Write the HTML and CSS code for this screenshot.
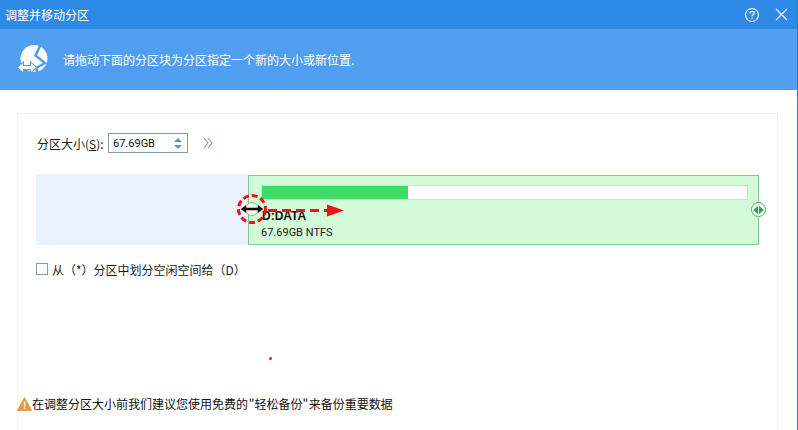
FILE: index.html
```html
<!DOCTYPE html>
<html lang="zh-CN">
<head>
    <meta charset="UTF-8">
    <title>调整并移动分区</title>
    <link rel="stylesheet" href="styles.css">
</head>
<body>
    <div class="window">
        <div class="titlebar">
            <span class="title">调整并移动分区</span>
            <div class="title-buttons">
                <svg class="help-icon" width="16" height="16" viewBox="0 0 16 16">
                    <circle cx="8" cy="8" r="6.500" fill="none" stroke="#fff" stroke-width="1.100"/>
                    <path d="M5.900 6.400c0-1.300 1-2 2.100-2s2.100.7 2.100 1.800c0 1.500-2.100 1.600-2.100 3.100" fill="none" stroke="#fff" stroke-width="1.200"/>
                    <rect x="7.400" y="10.400" width="1.300" height="1.300" fill="#fff"/>
                </svg>
                <svg class="close-icon" width="13" height="13" viewBox="0 0 13 13">
                    <path d="M1 1l11 11M12 1L1 12" stroke="#fff" stroke-width="1.100" fill="none"/>
                </svg>
            </div>
        </div>

        <div class="banner">
            <svg class="banner-icon" width="31" height="32" viewBox="0 0 31 32">
                <circle cx="16" cy="13.500" r="13.500" fill="#fff"/>
                <path d="M23 -1l-5.500 11.500 9.500 7.500-9 5 2 7" fill="none" stroke="#519ef0" stroke-width="2.500"/>
                <path d="M0 22.500l5-4.500v3h8v-3l5 4.500-5 4.500v-3h-8v3z" fill="#fff" stroke="#519ef0" stroke-width="2" paint-order="stroke"/>
            </svg>
            <span>请拖动下面的分区块为分区指定一个新的大小或新位置.</span>
        </div>

        <div class="panel">
            <div class="size-row">
                <label class="size-label" for="sizeInput">分区大小(<u>S</u>):</label>
                <div class="spinner">
                    <span id="sizeInput" class="spinner-value">67.69GB</span>
                    <span class="spinner-arrows">
                        <i class="arrow-up"></i>
                        <i class="arrow-down"></i>
                    </span>
                </div>
                <svg class="more-icon" width="10" height="12" viewBox="0 0 10 12">
                    <path d="M1 1l4 5-4 5M5 1l4 5-4 5" fill="none" stroke="#7d9fd0" stroke-width="1.100"/>
                </svg>
            </div>

            <div class="partition-strip">
                <div class="free-space"></div>
                <div class="partition">
                    <div class="usage-bar"><div class="usage-fill" style="width: 30.200%"></div></div>
                    <div class="partition-name">D:DATA</div>
                    <div class="partition-info">67.69GB NTFS</div>
                    <span class="handle handle-right"><i></i><i></i></span>
                </div>
                <svg class="drag-hint" width="110" height="36" viewBox="0 0 110 36">
                    <circle cx="16" cy="18" r="6.500" fill="#eef9ef" stroke="#6cc37f"/>
                    <circle cx="16" cy="18" r="13.500" fill="none" stroke="#ee1119" stroke-width="3" stroke-dasharray="6 3"/>
                    <path d="M32 19.500h62" stroke="#ee1119" stroke-width="3" stroke-dasharray="9 5" fill="none"/>
                    <path d="M91 13.500l17 6-17 6z" fill="#ee1119"/>
                    <path d="M4.500 18l6-4.500v3h11v-3l6 4.500-6 4.500v-3h-11v3z" fill="#000" stroke="#fff" stroke-width=".5"/>
                </svg>
            </div>

            <label class="split-option">
                <span class="checkbox"></span>
                <span>从（*）分区中划分空闲空间给（D）</span>
            </label>

            <div class="warning">
                <svg width="15" height="14" viewBox="0 0 15 14">
                    <path d="M7.500 .5L14.700 13.500H.3z" fill="#ee9a2e" stroke="#d9852a" stroke-width=".6"/>
                    <rect x="6.800" y="4.500" width="1.500" height="5" fill="#fff"/>
                    <rect x="6.800" y="10.500" width="1.500" height="1.500" fill="#fff"/>
                </svg>
                <span>在调整分区大小前我们建议您使用免费的 "轻松备份" 来备份重要数据</span>
            </div>

            <span class="red-dot"></span>
        </div>
    </div>
</body>
</html>
```

FILE: styles.css
```css
:root {
    --title-color: #2e8ae6;
    --banner-color: #519ef0;
    --panel-border: #f3f3f3;
    --green-border: #7fcb8d;
    --green-bg: #d4fbd8;
}

html, body {
    margin: 0;
    height: 100%;
    overflow: hidden;
}
body {
    font-family: "Noto Sans CJK SC", "Liberation Sans", sans-serif;
    font-size: 12px;
    color: #1c1c1c;
    background-color: #fff;
}
.window {
    height: 430px;
    border-right: 1px solid #2a7dc4;
    display: flex;
    flex-direction: column;
}
.titlebar {
    height: 29px;
    flex: none;
    background-color: var(--title-color);
    color: #fff;
    display: flex;
    align-items: center;
    justify-content: space-between;
    padding-left: 5px;
    padding-right: 9px;
}
.title {
    font-size: 12px;
}
.title-buttons {
    display: flex;
    align-items: center;
    gap: 15px;
}
.banner {
    height: 61px;
    flex: none;
    background-color: var(--banner-color);
    color: #fff;
    display: flex;
    align-items: center;
    gap: 14px;
    padding-left: 18px;
}
.banner-icon {
    flex: none;
    margin-top: 3px;
}
.panel {
    position: relative;
    flex: 1;
    margin: 23px 19px 0 17px;
    padding: 19px 18px 0 18px;
    border: 1px solid var(--panel-border);
    border-bottom: none;
    display: flex;
    flex-direction: column;
}
.size-row {
    display: flex;
    align-items: center;
    height: 20px;
}
.size-label {
    width: 71px;
    flex: none;
    margin-left: 1px;
}
.spinner {
    width: 74px;
    height: 18px;
    border: 1px solid #7f9db9;
    display: flex;
    align-items: center;
    justify-content: space-between;
    padding-left: 4px;
    font-family: Roboto, "Liberation Sans", sans-serif;
    font-size: 11px;
    margin-right: 15px;
}
.spinner-value {
    color: #111;
}
.spinner-arrows {
    display: flex;
    flex-direction: column;
    gap: 3px;
    margin-right: 5px;
}
.arrow-up, .arrow-down {
    display: block;
    width: 0;
    height: 0;
    border-left: 4px solid transparent;
    border-right: 4px solid transparent;
}
.arrow-up {
    border-bottom: 4px solid #6f8fb8;
}
.arrow-down {
    border-top: 4px solid #6f8fb8;
}
.partition-strip {
    position: relative;
    margin-top: 21px;
    height: 71px;
    display: flex;
}
.free-space {
    width: 212px;
    flex: none;
    background-color: #e9f2fe;
}
.partition {
    position: relative;
    width: 511px;
    flex: none;
    box-sizing: border-box;
    margin-top: 1px;
    background-color: var(--green-bg);
    border: 1px solid var(--green-border);
    padding: 9px 10px 0 12px;
    font-family: Roboto, "Liberation Sans", sans-serif;
    font-size: 11px;
}
.usage-bar {
    height: 13px;
    background-color: #fff;
    border: 1px solid #c5e3cb;
}
.usage-fill {
    height: 100%;
    background-color: #3edc66;
}
.partition-name {
    margin-top: 9px;
    margin-left: 1px;
    font-family: "Liberation Sans", sans-serif;
    font-weight: bold;
    font-size: 12px;
    line-height: 14px;
    color: #111;
}
.partition-info {
    margin-top: 3px;
    line-height: 14px;
    color: #222;
}
.handle {
    position: absolute;
    right: -8px;
    top: 26px;
    width: 13px;
    height: 13px;
    border: 1px solid #4fae67;
    border-radius: 50%;
    background-color: #f4fff5;
    display: flex;
    align-items: center;
    justify-content: center;
    gap: 1px;
}
.handle i {
    width: 0;
    height: 0;
    border-top: 4px solid transparent;
    border-bottom: 4px solid transparent;
}
.handle i:first-child {
    border-right: 5px solid #2fa04f;
}
.handle i:last-child {
    border-left: 5px solid #2fa04f;
}
.drag-hint {
    position: absolute;
    left: 200px;
    top: 17px;
}
.split-option {
    display: flex;
    align-items: center;
    gap: 4px;
    margin-top: 17px;
    height: 14px;
}
.checkbox {
    width: 10px;
    height: 10px;
    flex: none;
    border: 1px solid #7f9db9;
    background-color: #fff;
}
.warning {
    display: flex;
    align-items: center;
    margin-top: auto;
    margin-bottom: 18px;
    margin-left: -19px;
    color: #111;
    word-spacing: -2px;
}
.red-dot {
    position: absolute;
    left: 251px;
    top: 243px;
    width: 3px;
    height: 3px;
    border-radius: 50%;
    background-color: #ee1119;
}
```
